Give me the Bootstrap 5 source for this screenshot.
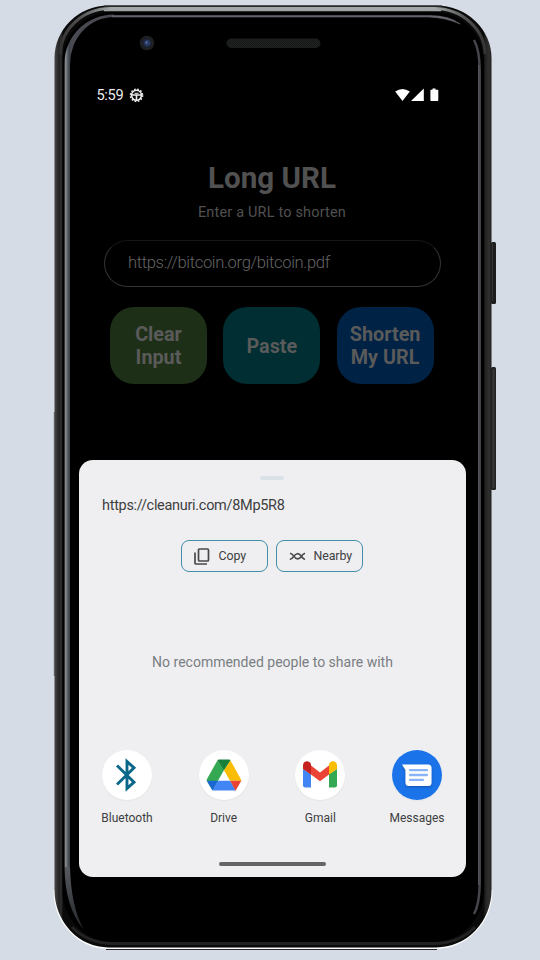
<!DOCTYPE html>
<html lang="en">
<head>
<meta charset="utf-8">
<meta name="viewport" content="width=device-width, initial-scale=1">
<title>URL Shortener</title>
<link href="https://cdn.jsdelivr.net/npm/bootstrap@5.3.0/dist/css/bootstrap.min.css" rel="stylesheet">
<style>
body{background:#d5dce6;font-family:Roboto,sans-serif;width:540px;height:960px;line-height:1.2}
svg{display:block}
.stage{width:540px;height:960px}
.chassis{inset:0}
.viewport{padding:86px 74px 0 79px;height:877px}
.status{height:18px;padding:0 26px 0 17.5px;color:#ececec;font-size:14.6px;letter-spacing:-.35px}
.clock{padding-top:1px}
.gear{margin:0 0 0 6px}
.app{height:356px;padding:56px 25px 0;color:#515151}
.title{font-size:29.6px;line-height:36px;font-weight:700;margin-right:1px}
.subtitle{font-size:14.5px;line-height:18px;font-weight:400;letter-spacing:.17px;color:#505050;margin:8px 1px 0 0}
.field{width:337px;height:47px;margin-top:18px;border:1px solid #343434;border-top-color:#151515;border-radius:24px;padding:0 23px 1px;font-size:16.6px;font-weight:300;letter-spacing:-.35px;color:#646464}
.actions{gap:16.3px;margin:20px 0 0 6px}
.action{width:97px;height:77px;border:0;border-radius:24px;padding:1px 0 0;font-size:19.8px;line-height:23px;font-weight:700;color:#5a5a5a}
.green{background:#1e2f17}.teal{background:#002e32}.blue{background:#002245}
.sheet{height:417px;background:#efeff1;border-radius:14px;color:#3d3e40}
.grabber{width:24px;height:4px;border-radius:2px;background:#dae1e7;margin:15.5px 1px 0 0}
.link{font-size:14.5px;line-height:20px;letter-spacing:-.3px;margin:16px 0 0 23px}
.chips{gap:8px;margin:24px 0 0 -1px}
.chip{width:87px;height:32px;border:1.3px solid #458ead;border-radius:8px;font-size:12.4px;letter-spacing:-.1px;color:#404143;background:none;padding:1px 0 0 11.5px}
.chip span{margin-left:8px}
.empty{font-size:14px;line-height:20px;margin-top:80px;color:#797e83}
.apps{padding:0 24px 0 23px;margin-top:78px}
.app-item{width:50px;font-size:12px}
.app-icon{width:50px;height:50px;border-radius:50%;background:#fff;box-shadow:0 1px 2px #0000000c}
.app-label{line-height:16px;margin-top:10px;white-space:nowrap}
.home{width:107px;height:4px;border-radius:2px;background:#656565;margin:36.5px 1px 0 0}
</style>
<script src="https://cdn.jsdelivr.net/npm/bootstrap@5.3.0/dist/js/bootstrap.bundle.min.js"></script>
</head>
<body class="m-0 overflow-hidden">
<main class="stage position-relative">
<svg class="chassis position-absolute" width="540" height="960" viewBox="0 0 540 960" aria-hidden="true">
<defs>
<linearGradient id="side" x1="54" x2="492" y1="0" y2="0" gradientUnits="userSpaceOnUse">
<stop offset="0" stop-color="#4b4b4b"/><stop offset=".006" stop-color="#363636"/><stop offset=".012" stop-color="#222"/><stop offset=".016" stop-color="#303030"/><stop offset=".021" stop-color="#0a0a0a"/><stop offset=".98" stop-color="#0a0a0a"/><stop offset=".986" stop-color="#252525"/><stop offset=".993" stop-color="#303030"/><stop offset="1" stop-color="#1e1c1b"/>
</linearGradient>
<linearGradient id="shine" x1="60" x2="486" y1="0" y2="0" gradientUnits="userSpaceOnUse">
<stop offset="0" stop-color="#333"/><stop offset=".05" stop-color="#555"/><stop offset=".12" stop-color="#a2a8a9"/><stop offset=".88" stop-color="#a2a8a9"/><stop offset=".95" stop-color="#555"/><stop offset="1" stop-color="#333"/>
</linearGradient>
<linearGradient id="glass" x1="64" x2="71" y1="0" y2="0" gradientUnits="userSpaceOnUse">
<stop offset="0" stop-color="#555"/><stop offset=".25" stop-color="#8b8d91"/><stop offset=".5" stop-color="#5c6067"/><stop offset=".75" stop-color="#3f454d"/><stop offset="1" stop-color="#4a4a52"/>
</linearGradient>
<linearGradient id="tail" x1="0" x2="0" y1="860" y2="932" gradientUnits="userSpaceOnUse">
<stop offset="0" stop-color="#5d6167"/><stop offset="1" stop-color="#202226"/>
</linearGradient>
<pattern id="mesh" width="2" height="2" patternUnits="userSpaceOnUse"><rect width="2" height="2" fill="#202121"/><path d="M0 0h1v1H0zM1 1h1v1H1z" fill="#171818"/></pattern>
</defs>
<rect x="491" y="242" width="5" height="62" rx="1.5" fill="#1d1d1d"/><path d="M492.5 244v57" stroke="#333"/>
<rect x="491" y="367" width="5" height="123" rx="1.5" fill="#222"/><path d="M493.5 369v119" stroke="#393939" stroke-width="2"/>
<path d="M54.300 890A54 58 0 0 0 108 948.200H436A56 58 0 0 0 491.700 890" fill="none" stroke="#fff" stroke-width="1.500"/>
<path d="M106 949.500H437" stroke="#292929"/>
<rect x="53.800" y="412" width="1" height="264" fill="#626466"/>
<path d="M54.500 58A54 52.500 0 0 1 108.500 5.500H436A55.500 52.500 0 0 1 491.500 58V890A55.500 57.500 0 0 1 436 947.500H108.500A54 57.500 0 0 1 54.500 890Z" fill="url(#side)"/>
<path d="M104 5.800H442" stroke="#474a4b" stroke-width="1.300"/>
<path d="M60.500 54A50 46 0 0 1 110.500 8.500H434A51 46 0 0 1 485 54" fill="none" stroke="url(#shine)" stroke-width="3"/>
<path d="M104 10.700H441" stroke="#c0c5c6"/>
<path d="M62.500 62A50 50 0 0 1 112.500 12H434A50 50 0 0 1 484 62V890A50 52 0 0 1 434 942H112.500A50 52 0 0 1 62.500 890Z" fill="#000"/>
<path d="M72 927Q88 943.500 113 943.500H434Q459 943.500 475 927" fill="none" stroke="#222" stroke-width="3"/>
<path d="M64.500 867V63A49.500 48.500 0 0 1 114 14.500V17A44 47 0 0 0 70 64V867Z" fill="url(#glass)"/>
<path d="M64.500 867H70Q71 907 84 930Q65 908 64.500 867Z" fill="url(#tail)"/>
<path d="M112 15.600H430Q449 15.600 460 24Q446 17.700 429 17H112Z" fill="#67656d" stroke="#67656d" stroke-width=".6"/>
<path d="M474 40Q479.700 50 479.700 71V880Q480 903 474 914" fill="none" stroke="#45454c" stroke-width="2.500"/>
<path d="M478.700 65V885" stroke="#5e5d65" stroke-width="1"/>
<circle cx="147" cy="43" r="7.300" fill="#1e1f20"/><circle cx="147" cy="43" r="4.600" fill="#1c2438"/><circle cx="147.200" cy="43" r="3" fill="#2a3c66"/><circle cx="146.500" cy="42.500" r="1" fill="#6578a6"/>
<rect x="226.500" y="38.500" width="94" height="9.500" rx="4.700" fill="url(#mesh)"/>
</svg>
<div class="viewport position-relative">
<header class="status d-flex align-items-center">
<span class="clock">5:59</span>
<svg class="gear" width="15" height="15" viewBox="0 0 15 15" fill="none" stroke="#eee"><circle cx="7.500" cy="7.300" r="5" stroke-width="1.600"/><circle cx="7.500" cy="7.300" r="6.200" stroke-width="1.300" stroke-dasharray="1.700 1.546"/><path d="M3 7H12M7.500 7V12" stroke-width="1.600"/><path d="M5.500 5.300H9.500"/></svg>
<svg class="ms-auto" width="45" height="14" viewBox="0 0 45 14" fill="#fff"><path d="M.2 3.500Q7.500-1.500 14.800 3.500L7.500 13Z"/><path d="M16 13L28.800.5V13Z"/><path d="M37.500.5h3V1.800h2.200q.6 0 .6.600V12.300q0 .7-.7.700h-6.500q-.7 0-.7-.7V2.400q0-.6.600-.6H37.500z"/></svg>
</header>
<section class="app">
<h1 class="title text-center mb-0">Long URL</h1>
<p class="subtitle text-center mb-0">Enter a URL to shorten</p>
<div class="field d-flex align-items-center">https://bitcoin.org/bitcoin.pdf</div>
<div class="actions d-flex">
<button class="btn action green">Clear<br>Input</button>
<button class="btn action teal">Paste</button>
<button class="btn action blue">Shorten<br>My URL</button>
</div>
</section>
<section class="sheet d-flex flex-column align-items-center">
<div class="grabber"></div>
<div class="link align-self-start">https://cleanuri.com/8Mp5R8</div>
<div class="chips d-flex">
<button class="chip d-flex align-items-center">
<svg width="17" height="17" viewBox="0 0 17 17" fill="none" stroke="#48494b" stroke-width="1.700"><rect x="4.500" y="1" width="10" height="12" rx="1"/><path d="M1 4.500V15q0 1 1 1H13"/></svg>
<span>Copy</span></button>
<button class="chip d-flex align-items-center">
<svg width="17" height="9" viewBox="0 0 17 9" fill="none" stroke="#48494b" stroke-width="1.600"><path d="M.8 7.500Q2.500 7.300 4.500 4.700Q8.400-1 12.200 4Q14 6.800 16 7.500M1 1.200Q3 1.500 4.800 4.100Q8.500 9.500 12.300 4.400Q14 1.800 16 1.200"/></svg>
<span>Nearby</span></button>
</div>
<div class="empty">No recommended people to share with</div>
<div class="apps d-flex justify-content-between w-100">
<div class="app-item d-flex flex-column align-items-center">
<div class="app-icon d-flex align-items-center justify-content-center"><svg width="22" height="34" viewBox="0 0 22 34" fill="none" stroke="#096789" stroke-width="2.900"><path d="M1 7.500L18 24.200L11 30.500V3.500L18 9.800L1 26.500"/></svg></div><div class="app-label">Bluetooth</div></div>
<div class="app-item d-flex flex-column align-items-center">
<div class="app-icon d-flex align-items-center justify-content-center"><svg width="36" height="32" viewBox="0 0 36 32"><path d="M11.500 1.500L18 11 6.500 31.500 1 22Q.4 21 1 20L10.500 3Z" fill="#34a853"/><path d="M13 .5H23Q24 .5 24.500 1.500L18 11.500 11.500 1.500Q12 .5 13 .5Z" fill="#188038"/><path d="M24.500 1.500L35 20.500Q35.500 21.400 35.200 21.700H24L18 11.300Z" fill="#fbbc04"/><path d="M24 21.700H35.300L30 31Q29.500 31.700 29 31.500Z" fill="#ea4335"/><path d="M12 21.700H24L29.500 31.500H6.500Z" fill="#4285f4"/><path d="M.7 21.700H12L6.500 31.500Z" fill="#1967d2"/></svg></div><div class="app-label">Drive</div></div>
<div class="app-item d-flex flex-column align-items-center">
<div class="app-icon d-flex align-items-center justify-content-center"><svg width="34" height="27" viewBox="0 0 34 27"><path d="M0 8L8 13V26.500H2.300Q0 26.500 0 24.200Z" fill="#4285f4"/><path d="M34 8L26 13V26.500H31.700Q34 26.500 34 24.200Z" fill="#34a853"/><path d="M8 4.500L17 11.500L26 4.500V13.500L17 20.200L8 13.500Z" fill="#ea4335"/><path d="M0 8V4.500C0 .5 4-1 7 1.500L8 3V13.500Z" fill="#c5221f"/><path d="M34 8V4.500C34 .5 30-1 27 1.500L26 3V13.500Z" fill="#fbbc04"/></svg></div><div class="app-label">Gmail</div></div>
<div class="app-item d-flex flex-column align-items-center">
<div class="app-icon"><svg width="50" height="50" viewBox="0 0 50 50"><defs><filter id="drop" x="-20%" y="-20%" width="140%" height="150%"><feDropShadow dx="0" dy="1" stdDeviation="1" flood-color="#123d88" flood-opacity=".6"/></filter></defs><circle cx="25" cy="25" r="25" fill="#1a73e8"/><path d="M10 14.500H36Q39.500 14.500 39.500 18V32.500Q39.500 36 36 36H17Q13.500 36 13.500 32.500V20Z" fill="#fff" filter="url(#drop)"/><path d="M18 20.200H35M18 25H35M18 29.800H31" stroke="#8ab4f8" stroke-width="2.300" stroke-linecap="round"/></svg></div><div class="app-label">Messages</div></div>
</div>
<div class="home"></div>
</section>
</div>
</main>
</body>
</html>
